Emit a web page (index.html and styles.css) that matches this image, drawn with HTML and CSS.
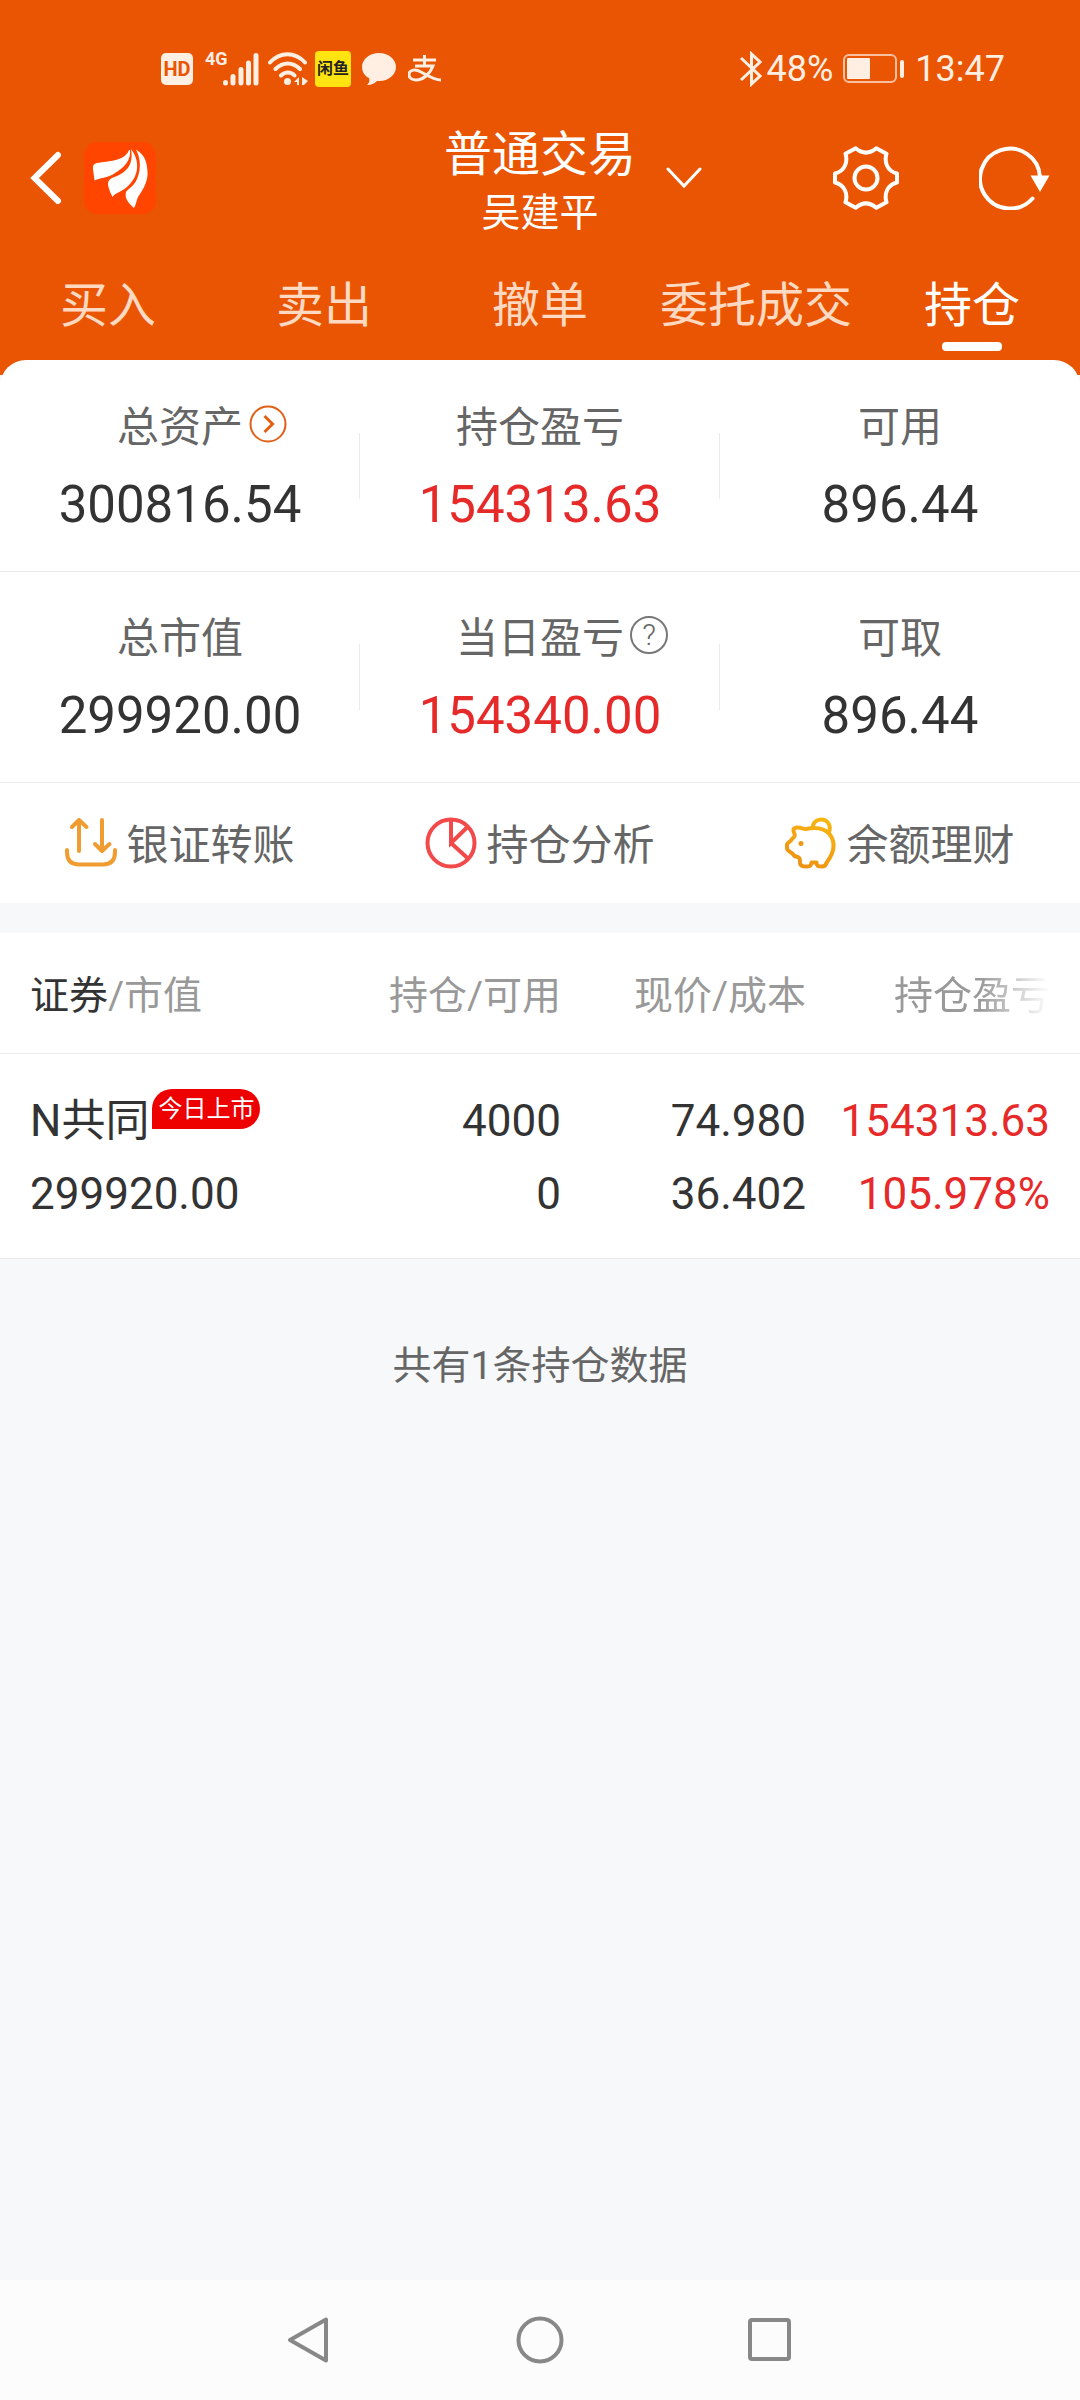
FILE: index.html
```html
<!DOCTYPE html>
<html lang="zh-CN">
<head>
<meta charset="utf-8">
<meta name="viewport" content="width=device-width">
<title>普通交易 - 持仓</title>
<link rel="stylesheet" href="styles.css">
</head>
<body>
<header class="top">
  <div class="status">
    <div class="status-left">
      <span class="hd">HD</span>
      <span class="net">4G</span>
      <svg class="signal" width="36" height="34" viewBox="0 0 36 34" fill="none" stroke="currentColor" stroke-width="5" stroke-linecap="round"><path d="M2.500 30.500v.5M10 24.500V31M18 17.500V31M25.500 11V31M33 3.500V31"/></svg>
      <svg class="wifi" width="40" height="34" viewBox="0 0 40 34" fill="none" stroke="currentColor" stroke-width="4" stroke-linecap="round"><path d="M2 10.500C12-.5 27-.5 37 10.500M7.500 17C15 9.500 24.500 9.500 32 17M13 23.500C17 19.500 23 19.500 26.500 23.500"/><circle cx="19.500" cy="29.500" r="3.500" fill="currentColor" stroke="none"/><path d="M31 25v8h-2v-3h-3zM34 25l6 4-4 4h-2z" fill="currentColor" stroke="none"/></svg>
      <span class="fish">闲鱼</span>
      <svg class="chat" width="34" height="34" viewBox="0 0 34 34" fill="currentColor"><path d="M17 1C8 1 0 7 0 15c0 5 3 9 7 11 1 3 0 5-2 7 5 0 8-2 10-4 11 1 19-6 19-14S26 1 17 1z"/></svg>
      <svg class="pay" width="34" height="28" viewBox="0 0 34 28" fill="none" stroke="currentColor" stroke-width="3"><path d="M5 5h23M16.500 0v11M7 11h18C22 19 15 25 8 25c-5 0-7-3-7-5 0-6 7-6 12-3 6 3 13 8 20 8"/></svg>
    </div>
    <div class="status-right">
      <svg width="22" height="36" viewBox="0 0 22 36" fill="none" stroke="currentColor" stroke-width="3"><path d="M1 7l19 18-8.500 8V3L20 11 1 29"/></svg>
      <span class="pct">48%</span>
      <svg class="battery" width="62" height="30" viewBox="0 0 62 30" fill="none"><rect x="1" y="1" width="52" height="27" rx="5" stroke="currentColor" stroke-width="2" opacity=".7"/><rect x="4" y="4" width="23" height="21" rx="1" fill="currentColor"/><rect x="57" y="6" width="4" height="18" rx="2" fill="currentColor"/></svg>
      <span>13:47</span>
    </div>
  </div>

  <div class="bar">
    <div class="bar-left">
      <button class="icon-btn" aria-label="返回"><svg width="32" height="54" viewBox="0 0 32 54" fill="none" stroke="#fff" stroke-width="6" stroke-linecap="round"><path d="M28 4L4.500 27 28 50"/></svg></button>
      <a class="logo" href="#" aria-label="首页"><svg width="72" height="72" viewBox="0 0 72 72" fill="#fff"><path d="M45 8C41 19 25 19 13 21 9 22 9 24 9 27L10.500 38.500C15 36 24 36 31 31 41 25 47 18 46 8Z"/><path d="M47 7C50 24 42 31 28 36 24 38 24 41 24 43 25 48 27 52 28.500 55 32 50 38 50 44 44 54 35 57 20 47 7Z"/><path d="M52 7.500C57 17 57 28 53 37 50 44 45 46 42 50 41 55 42 59 50 66 53 61 52 57 56 52 63 42 64 33 63.500 30 63 20 61 13 52 7.500Z"/></svg></a>
    </div>
    <div class="title">
      <h1>普通交易</h1>
      <p>吴建平</p>
    </div>
    <div class="bar-right">
      <button class="icon-btn chevron" aria-label="切换账户"><svg width="36" height="22" viewBox="0 0 36 22" fill="none" stroke="#fff" stroke-width="3" stroke-linecap="round"><path d="M2 2l16 17L34 2"/></svg></button>
      <button class="icon-btn" aria-label="设置"><svg width="66" height="64" viewBox="0 0 66 64" fill="none" stroke="#fff" stroke-width="4" stroke-linejoin="round"><path d="M22.700 2.300Q33 11 43.300 2.300L53.500 7.700C51 16 54 25 64 27.500V36.500C54 39 51 48 53.500 56.300L43.300 61.700Q33 53 22.700 61.700L12.500 56.300C15 48 12 39 2 36.500V27.500C12 25 15 16 12.500 7.700Z"/><circle cx="33" cy="32" r="11.500"/></svg></button>
      <button class="icon-btn" aria-label="刷新"><svg width="71" height="64" viewBox="0 0 71 64" fill="none" stroke="#fff" stroke-width="4" stroke-linecap="round"><path d="M53.500 52.500A30 30 0 1 1 61 31"/><path d="M51.500 29.500h19L61 46z" fill="#fff" stroke="none"/></svg></button>
    </div>
  </div>

  <nav class="tabs">
    <a href="#">买入</a>
    <a href="#">卖出</a>
    <a href="#">撤单</a>
    <a href="#">委托成交</a>
    <a href="#" class="active" aria-current="page">持仓</a>
  </nav>
</header>

<main>
  <section class="panel">
    <div class="stats">
      <div class="stat">
        <div class="label">总资产<button class="hint go" aria-label="查看总资产"><svg width="38" height="38" viewBox="0 0 38 38" fill="none" stroke="#e06018"><circle cx="19" cy="19" r="17.500" stroke-width="2"/><path d="M15.500 11l8 8-8 8" stroke-width="3"/></svg></button></div>
        <div class="value">300816.54</div>
      </div>
      <div class="stat">
        <div class="label">持仓盈亏</div>
        <div class="value red">154313.63</div>
      </div>
      <div class="stat">
        <div class="label">可用</div>
        <div class="value">896.44</div>
      </div>
    </div>
    <div class="stats">
      <div class="stat">
        <div class="label">总市值</div>
        <div class="value">299920.00</div>
      </div>
      <div class="stat">
        <div class="label">当日盈亏<button class="hint help">?</button></div>
        <div class="value red">154340.00</div>
      </div>
      <div class="stat">
        <div class="label">可取</div>
        <div class="value">896.44</div>
      </div>
    </div>
    <div class="actions">
      <a href="#"><svg width="52" height="52" viewBox="0 0 52 52" fill="none" stroke="#f09c30" stroke-width="4" stroke-linecap="round" stroke-linejoin="round"><path d="M14 34V3M7 10l7-7 7.500 7M37 3v31M30 27l7 7 7.500-7M2 33v2q0 12.500 12 12.500h24q12 0 12-12.500v-2"/></svg><span>银证转账</span></a>
      <a href="#"><svg width="52" height="52" viewBox="0 0 52 52" fill="none" stroke="#f24a4a" stroke-width="4"><circle cx="26" cy="26" r="23.500"/><path d="M26 3v23l16.500-16M26 26l17 15.500"/></svg><span>持仓分析</span></a>
      <a href="#"><svg width="52" height="52" viewBox="0 0 52 52" fill="none" stroke="url(#pig)" stroke-width="4" stroke-linejoin="round"><defs><linearGradient id="pig" gradientUnits="userSpaceOnUse" x1="40" y1="0" x2="16" y2="52"><stop offset="0" stop-color="#f8b810"/><stop offset="1" stop-color="#ee9014"/></linearGradient></defs><path d="M27.500 11.500C28 5 32 2.500 36 2.500c7 0 11 7 7.500 13.500"/><path d="M8.500 14C8 11 10 10.500 13 10.500c4 0 4 1.500 8 1.500 10-2 18-1 23.500 5 6 8 5 18-2.500 28-1 3-2 4.500-5 4.500-4 0-5 0-5.500-4h-5c-.5 3-1 4-4.500 4-5 0-7-.5-7-4.500C15 40 14 40.500 9.500 39 7 34 2 35 2 31v-3.500c0-2 3.500-2 5-5.500 4-3.500 3-4 1.500-8z"/><circle cx="16" cy="26.500" r="2.500" fill="#ef9716" stroke="none"/></svg><span>余额理财</span></a>
    </div>
  </section>

  <table class="holdings">
    <colgroup><col><col class="mid"><col class="mid"><col class="last"></colgroup>
    <thead>
      <tr><th><b>证券</b>/市值</th><th>持仓/可用</th><th>现价/成本</th><th><span class="fade">持仓盈亏</span></th></tr>
    </thead>
    <tbody>
      <tr>
        <td><div class="name">N共同<span class="badge">今日上市</span></div><div>299920.00</div></td>
        <td><div>4000</div><div>0</div></td>
        <td><div>74.980</div><div>36.402</div></td>
        <td class="red"><div>154313.63</div><div>105.978%</div></td>
      </tr>
    </tbody>
  </table>
  <p class="count">共有1条持仓数据</p>
</main>

<footer class="sysnav">
  <button class="icon-btn" aria-label="返回"><svg width="60" height="60" viewBox="0 0 60 60" fill="none" stroke="#888" stroke-width="4" stroke-linejoin="round"><path d="M46 9.500V50.500L10 30Z"/></svg></button>
  <button class="icon-btn" aria-label="主屏幕"><svg width="60" height="60" viewBox="0 0 60 60" fill="none" stroke="#888" stroke-width="4"><circle cx="30" cy="30" r="21.500"/></svg></button>
  <button class="icon-btn" aria-label="最近任务"><svg width="60" height="60" viewBox="0 0 60 60" fill="none" stroke="#888" stroke-width="4"><rect x="10" y="10" width="39" height="39" rx="2"/></svg></button>
</footer>
</body>
</html>
```
FILE: styles.css
```css
* {
  box-sizing: border-box;
}

body {
  margin: 0;
  min-height: 100vh;
  display: flex;
  flex-direction: column;
  background: #f6f8fa;
  color: #333;
  font-family: Roboto, "Noto Sans CJK SC", sans-serif;
}

h1,
p {
  margin: 0;
  font-weight: 400;
}

a {
  color: inherit;
  text-decoration: none;
}

svg {
  display: block;
  flex: none;
}

button {
  margin: 0;
  padding: 0;
  border: 0;
  background: none;
  color: inherit;
  font: inherit;
}

.red {
  color: #e62a2a;
}

/* header */
.top {
  padding-bottom: 24px;
  background: #e95502;
  color: #fff;
}

.status {
  display: flex;
  justify-content: space-between;
  padding: 41px 75px 9px 161px;
  color: #ffeee2;
  font-size: 36px;
  line-height: 56px;
}

.status-left,
.status-right {
  display: flex;
  align-items: center;
}

.hd {
  width: 32px;
  border-radius: 5px;
  background: #ffeee2;
  color: #e95502;
  font-size: 20px;
  font-weight: 700;
  line-height: 32px;
  text-align: center;
}

.net {
  align-self: flex-start;
  margin-left: 12px;
  width: 18px;
  font-size: 18px;
  font-weight: 700;
  line-height: 36px;
}

.wifi {
  margin-left: 9px;
}

.fish {
  margin-left: 7px;
  width: 36px;
  border-radius: 4px;
  background: #ffe411;
  color: #222;
  font-size: 16px;
  font-weight: 700;
  line-height: 36px;
  text-align: center;
}

.chat {
  margin-left: 11px;
}

.pay {
  margin-left: 12px;
}

.pct {
  margin-left: 5px;
}

.battery {
  margin: 0 10px;
}

.bar {
  display: grid;
  grid-template-columns: 1fr auto 1fr;
  align-items: center;
  height: 144px;
  padding: 0 30px;
}

.bar-left,
.bar-right {
  display: flex;
  align-items: center;
}

.logo {
  margin-left: 22px;
  border-radius: 14px;
  background: #ff4500;
}

.title {
  padding-top: 12px;
  text-align: center;
}

.title h1 {
  font-size: 48px;
  line-height: 58px;
}

.title p {
  font-size: 39px;
  line-height: 58px;
}

.bar-right {
  gap: 80px;
}

.chevron {
  margin: 0 auto 0 30px;
}

.tabs {
  display: grid;
  grid-template-columns: repeat(5, 1fr);
  padding-top: 26px;
}

.tabs a {
  display: flex;
  flex-direction: column;
  align-items: center;
  gap: 6px;
  color: #ffd9c2;
  font-size: 48px;
  line-height: 60px;
}

.tabs a::after {
  content: "";
  width: 60px;
  height: 9px;
  border-radius: 4px;
}

.tabs .active {
  color: #fff;
}

.tabs .active::after {
  background: #fff;
}

/* account summary */
main {
  flex: 1;
}

.panel {
  margin-top: -15px;
  padding-top: 1px;
  border-radius: 26px 26px 0 0;
  background: #fff;
}

.stats {
  display: grid;
  grid-template-columns: repeat(3, 1fr);
  border-bottom: 1px solid #eaeaea;
}

.stat {
  display: flex;
  flex-direction: column;
  align-items: center;
  gap: 17px;
  padding: 37px 0 36px;
  line-height: 60px;
}

.stat:not(:last-child) {
  background: linear-gradient(#eaeaea, #eaeaea) right center / 1px 66px no-repeat;
}

.label {
  position: relative;
  color: #666;
  font-size: 42px;
}

.hint {
  position: absolute;
  top: 7px;
  left: 100%;
  margin-left: 6px;
}

.help {
  width: 38px;
  height: 38px;
  border: 2px solid #777;
  border-radius: 50%;
  color: #666;
  font-size: 30px;
  font-weight: 300;
  line-height: 34px;
  text-align: center;
}

.value {
  font-size: 51px;
}

.actions {
  display: grid;
  grid-template-columns: repeat(3, 1fr);
}

.actions a {
  display: flex;
  align-items: center;
  justify-content: center;
  gap: 9px;
  height: 120px;
  color: #666;
  font-size: 42px;
  line-height: 60px;
}

.actions span {
  padding-top: 5px;
}

/* holdings */
.holdings {
  width: 100%;
  margin-top: 30px;
  border-collapse: separate;
  border-spacing: 0;
  table-layout: fixed;
  background: #fff;
  text-align: right;
}

.mid {
  width: 245px;
}

.last {
  width: 274px;
}

.holdings th,
.holdings td {
  border-bottom: 1px solid #eaeaea;
  white-space: nowrap;
}

.holdings th {
  padding: 6px 0 0;
  color: #999;
  font-size: 39px;
  font-weight: 400;
  line-height: 114px;
  text-align: right;
}

.holdings th b {
  color: #333;
  font-weight: 400;
}

.holdings td {
  padding: 31px 0 27px;
  font-size: 44px;
  line-height: 73px;
}

.holdings th:first-child,
.holdings td:first-child {
  padding-left: 30px;
  text-align: left;
}

.holdings th:last-child,
.holdings td:last-child {
  padding-right: 30px;
}

.fade {
  -webkit-mask-image: linear-gradient(to right, #000 55%, transparent);
  mask-image: linear-gradient(to right, #000 55%, transparent);
}

.name {
  display: flex;
  align-items: flex-start;
}

.badge {
  margin: 4px 0 0 3px;
  padding: 0 6px;
  border-radius: 20px 20px 20px 0;
  background: #ee0000;
  color: #fff;
  font-size: 24px;
  line-height: 40px;
}

.count {
  padding-top: 77px;
  color: #666;
  font-size: 39px;
  line-height: 60px;
  text-align: center;
}

/* system navigation */
.sysnav {
  display: flex;
  justify-content: center;
  gap: 170px;
  padding: 30px 0;
  background: #fcfcfc;
}
```
